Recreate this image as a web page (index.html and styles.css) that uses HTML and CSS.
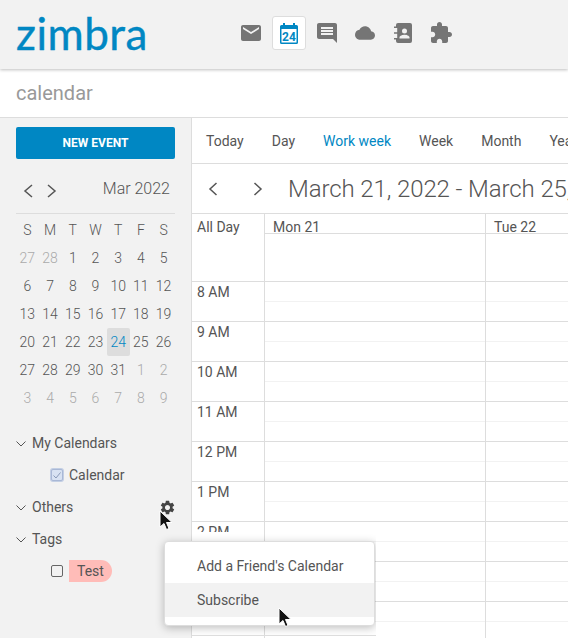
FILE: index.html
```html
<!DOCTYPE html>
<html lang="en">
<head>
  <meta charset="UTF-8">
  <meta name="viewport" content="width=device-width, initial-scale=1.0">
  <title>Zimbra calendar</title>
  <link rel="stylesheet" href="styles.css">
</head>
<body>
  <header class="topbar">
    <span class="logo">zimbra</span>
    <nav class="apps">
      <span class="app app-mail">
        <svg viewBox="0 0 24 24" width="24" height="24"><path d="M20 4H4c-1.1 0-2 .9-2 2v12c0 1.1.9 2 2 2h16c1.1 0 2-.9 2-2V6c0-1.1-.9-2-2-2zm0 4l-8 5-8-5V6l8 5 8-5v2z"/></svg>
      </span>
      <span class="app app-active">
        <svg viewBox="0 0 18 21" width="18" height="21">
          <path d="M3 0h2v2h8V0h2v2h1.5A1.5 1.5 0 0 1 18 3.5v16a1.5 1.5 0 0 1-1.5 1.5h-15A1.5 1.5 0 0 1 0 19.5v-16A1.5 1.5 0 0 1 1.500 2H3z"/>
          <rect class="cal-face" x="1.500" y="6" width="15" height="13.500"/>
          <text class="cal-num" x="9" y="17.500">24</text>
        </svg>
      </span>
      <span class="app">
        <svg viewBox="0 0 24 24" width="24" height="24"><path d="M20 2H4c-1.100 0-2 .9-2 2v12c0 1.100.9 2 2 2h14l4 4V4c0-1.100-.9-2-2-2zm-2 12H6v-2h12v2zm0-3H6V9h12v2zm0-3H6V6h12v2z"/></svg>
      </span>
      <span class="app">
        <svg viewBox="0 0 24 24" width="20" height="20"><path d="M19.350 10.040C18.670 6.590 15.640 4 12 4 9.110 4 6.600 5.640 5.350 8.040 2.340 8.360 0 10.910 0 14c0 3.310 2.690 6 6 6h13c2.760 0 5-2.240 5-5 0-2.640-2.050-4.780-4.650-4.960z"/></svg>
      </span>
      <span class="app">
        <svg viewBox="0 0 24 24" width="24" height="24">
          <path fill-rule="evenodd" d="M7 2h12a2 2 0 0 1 2 2v16a2 2 0 0 1-2 2H7a2 2 0 0 1-2-2V4a2 2 0 0 1 2-2zm6.500 5.500a2.500 2.500 0 1 0 0 5 2.500 2.500 0 0 0 0-5zM8.500 17.500h10v-1.200c0-1.700-3.300-2.600-5-2.600s-5 .9-5 2.600z"/>
          <path d="M3 5.500h4v1.500H3zM3 11.250h4v1.500H3zM3 17h4v1.500H3z"/>
          <path class="cal-gap" d="M5 7h1.200v4.250H5zM5 12.750h1.200V17H5z"/>
        </svg>
      </span>
      <span class="app">
        <svg viewBox="0 0 24 24" width="24" height="24"><path d="M20.500 11H19V7c0-1.100-.9-2-2-2h-4V3.500C13 2.120 11.880 1 10.500 1S8 2.120 8 3.500V5H4c-1.100 0-1.990.9-1.990 2v3.800H3.500c1.490 0 2.700 1.210 2.700 2.700s-1.210 2.700-2.700 2.700H2V20c0 1.100.9 2 2 2h3.800v-1.500c0-1.490 1.210-2.700 2.700-2.700 1.490 0 2.700 1.210 2.700 2.700V22H17c1.100 0 2-.9 2-2v-4h1.500c1.380 0 2.500-1.120 2.500-2.500S21.880 11 20.500 11z"/></svg>
      </span>
    </nav>
  </header>

  <div class="subbar">calendar</div>

  <div class="layout">
    <aside class="sidebar">
      <button class="new-event">NEW EVENT</button>

      <div class="mini-head">
        <svg class="chev" viewBox="0 0 12 16" width="12" height="16"><path d="M10 2 3 8l7 6"/></svg>
        <svg class="chev" viewBox="0 0 12 16" width="12" height="16"><path d="M2 2l7 6-7 6"/></svg>
        <span class="mini-month">Mar 2022</span>
      </div>

      <div class="mini-cal">
        <span class="dow">S</span><span class="dow">M</span><span class="dow">T</span><span class="dow">W</span><span class="dow">T</span><span class="dow">F</span><span class="dow">S</span>
        <span class="off">27</span><span class="off">28</span><span>1</span><span>2</span><span>3</span><span>4</span><span>5</span>
        <span>6</span><span>7</span><span>8</span><span>9</span><span>10</span><span>11</span><span>12</span>
        <span>13</span><span>14</span><span>15</span><span>16</span><span>17</span><span>18</span><span>19</span>
        <span>20</span><span>21</span><span>22</span><span>23</span><span class="today">24</span><span>25</span><span>26</span>
        <span>27</span><span>28</span><span>29</span><span>30</span><span>31</span><span class="off">1</span><span class="off">2</span>
        <span class="off">3</span><span class="off">4</span><span class="off">5</span><span class="off">6</span><span class="off">7</span><span class="off">8</span><span class="off">9</span>
      </div>

      <ul class="tree">
        <li class="tree-group">
          <svg class="tree-chev" viewBox="0 0 10 6" width="10" height="6"><path d="M.5.500 5 5 9.500.500"/></svg>
          My Calendars
        </li>
        <li class="tree-item">
          <span class="check check-on">
            <svg viewBox="0 0 10 10" width="10" height="10"><path d="M1.500 5.500 4 8l4.500-5.500"/></svg>
          </span>
          Calendar
        </li>
        <li class="tree-group">
          <svg class="tree-chev" viewBox="0 0 10 6" width="10" height="6"><path d="M.5.500 5 5 9.500.500"/></svg>
          Others
          <svg class="gear" viewBox="0 0 24 24" width="17" height="17"><path d="M19.140 12.940c.04-.3.060-.61.060-.94 0-.32-.02-.64-.07-.94l2.030-1.580a.49.49 0 0 0 .12-.61l-1.920-3.320a.488.488 0 0 0-.59-.22l-2.390.96c-.5-.38-1.030-.7-1.620-.94l-.36-2.540a.484.484 0 0 0-.48-.41h-3.840c-.24 0-.43.170-.47.41l-.36 2.540c-.59.240-1.130.57-1.620.94l-2.390-.96c-.22-.08-.47 0-.59.220L2.740 8.870c-.12.210-.08.470.12.610l2.030 1.580c-.05.3-.09.630-.09.940s.02.640.07.940l-2.030 1.580a.49.49 0 0 0-.12.610l1.920 3.320c.12.220.37.290.59.220l2.390-.96c.5.380 1.030.7 1.620.94l.36 2.540c.05.240.24.410.48.410h3.840c.24 0 .44-.17.470-.41l.36-2.540c.59-.24 1.130-.56 1.620-.94l2.390.96c.22.080.47 0 .59-.22l1.920-3.320c.12-.22.070-.47-.12-.61l-2.010-1.580zM12 15.600c-1.980 0-3.600-1.620-3.600-3.600s1.620-3.600 3.600-3.600 3.600 1.620 3.600 3.600-1.620 3.600-3.600 3.600z"/></svg>
        </li>
        <li class="tree-group">
          <svg class="tree-chev" viewBox="0 0 10 6" width="10" height="6"><path d="M.5.500 5 5 9.500.500"/></svg>
          Tags
        </li>
        <li class="tree-item">
          <span class="check"></span>
          <span class="tag">Test</span>
        </li>
      </ul>
    </aside>

    <main class="main">
      <div class="views">
        <span class="view">Today</span>
        <span class="view">Day</span>
        <span class="view view-active">Work week</span>
        <span class="view">Week</span>
        <span class="view">Month</span>
        <span class="view">Year</span>
      </div>

      <div class="datebar">
        <svg class="chev" viewBox="0 0 12 16" width="12" height="16"><path d="M9.500 2 3 8l6.500 6"/></svg>
        <svg class="chev" viewBox="0 0 12 16" width="12" height="16"><path d="M2.500 2 9 8l-6.500 6"/></svg>
        <span class="date-title">March 21, 2022 - March 25, 2022</span>
      </div>

      <div class="grid">
        <div class="row row-head">
          <div class="time">All Day</div>
          <div class="day"><div class="day-name">Mon 21</div></div>
          <div class="day"><div class="day-name">Tue 22</div></div>
        </div>
        <div class="row"><div class="time">8 AM</div><div class="day slot"></div><div class="day slot"></div></div>
        <div class="row"><div class="time">9 AM</div><div class="day slot"></div><div class="day slot"></div></div>
        <div class="row"><div class="time">10 AM</div><div class="day slot"></div><div class="day slot"></div></div>
        <div class="row"><div class="time">11 AM</div><div class="day slot"></div><div class="day slot"></div></div>
        <div class="row"><div class="time">12 PM</div><div class="day slot"></div><div class="day slot"></div></div>
        <div class="row"><div class="time">1 PM</div><div class="day slot"></div><div class="day slot"></div></div>
        <div class="row"><div class="time"><span class="time-cut">2 PM</span></div><div class="day slot"></div><div class="day slot"></div></div>
        <div class="row"><div class="time"></div><div class="day slot"></div><div class="day slot"></div></div>
        <div class="row"><div class="time"></div><div class="day slot"></div><div class="day slot"></div></div>
      </div>
    </main>
  </div>

  <div class="menu-clip">
    <div class="menu">
      <div class="menu-item">Add a Friend's Calendar</div>
      <div class="menu-item menu-item-hover">Subscribe</div>
    </div>
  </div>

  <svg class="cursor cursor-gear" viewBox="0 0 14 22" width="14" height="22"><path d="M1 1v16l4-3.500 2.500 6 2.500-1-2.500-6H13z"/></svg>
  <svg class="cursor cursor-menu" viewBox="0 0 14 22" width="14" height="22"><path d="M1 1v16l4-3.500 2.500 6 2.500-1-2.500-6H13z"/></svg>
</body>
</html>
```

FILE: styles.css
```css
* {
  box-sizing: border-box;
}

html, body {
  height: 100%;
}

body {
  margin: 0;
  overflow: hidden;
  position: relative;
  font-family: Roboto, "Liberation Sans", sans-serif;
  font-size: 14px;
  color: #555;
  background: #fff;
}

/* top bar */
.topbar {
  position: relative;
  z-index: 2;
  display: flex;
  align-items: center;
  height: 69px;
  padding-left: 16px;
  background: #f2f2f2;
  box-shadow: 0 1px 3px rgba(0, 0, 0, .25);
}

.logo {
  width: 130px;
  font-family: Lato, sans-serif;
  font-size: 44px;
  line-height: 1;
  letter-spacing: .5px;
  margin-top: -4px;
  color: #0087c3;
  -webkit-text-stroke: .4px #0087c3;
}

.apps {
  display: flex;
  align-items: center;
  margin: -3px 0 0 88px;
}

.app {
  display: flex;
  align-items: center;
  justify-content: center;
  width: 34px;
  height: 34px;
  margin-right: 4px;
}

.app svg {
  fill: #757575;
}

.app .cal-gap {
  fill: #f2f2f2;
}

.app-active {
  background: #fff;
  border: 1px solid #ddd;
  border-radius: 3px;
}

.app-active svg {
  fill: #0087c3;
}

.app-active .cal-face {
  fill: #fff;
}

.app-active .cal-num {
  fill: #0087c3;
  font-size: 12px;
  font-weight: 700;
  text-anchor: middle;
}

.subbar {
  height: 49px;
  padding: 12px 16px 0;
  font-size: 20px;
  line-height: 24px;
  color: #999;
  border-bottom: 1px solid #ddd;
}

.layout {
  display: flex;
  height: 520px;
}

/* left column */
.sidebar {
  flex: none;
  width: 192px;
  padding: 9px 16px 0;
  background: #f2f2f2;
  border-right: 1px solid #ddd;
}

.new-event {
  display: block;
  width: 159px;
  height: 32px;
  border: 0;
  border-radius: 2px;
  background: #0087c3;
  color: #fff;
  font-family: inherit;
  font-size: 12px;
  font-weight: 700;
}

.mini-head {
  display: flex;
  align-items: center;
  height: 55px;
  padding: 9px 5px 0 6px;
  border-bottom: 1px solid #ddd;
  gap: 12px;
}

.chev {
  flex: none;
  fill: none;
  stroke: #555;
  stroke-width: 1.500;
}

.mini-month {
  margin-left: auto;
  margin-top: -4px;
  font-size: 16px;
  font-weight: 300;
}

.mini-cal {
  display: grid;
  grid-template-columns: repeat(7, 22.710px);
  grid-auto-rows: 28px;
  margin-top: 1px;
  padding-top: 1px;
  font-weight: 300;
  text-align: center;
  line-height: 28px;
}

.mini-cal .off {
  color: #aaa;
}

.mini-cal .today {
  background: #ddd;
  border-radius: 2px;
  color: #0087c3;
}

.tree {
  list-style: none;
  margin: 15px 0 0;
  padding: 0;
}

.tree li {
  display: flex;
  align-items: center;
  height: 32px;
}

.tree-chev {
  flex: none;
  margin: 1px 6px 0 0;
  fill: none;
  stroke: #555;
}

.tree-group {
  position: relative;
}

.tree-item {
  padding-left: 35px;
}

.gear {
  position: absolute;
  left: 143px;
  top: 8px;
  fill: #444;
}

.check {
  flex: none;
  display: flex;
  align-items: center;
  justify-content: center;
  width: 12px;
  height: 12px;
  margin-right: 6px;
  border: 1px solid #666;
  border-radius: 2px;
}

.check-on {
  background: #d8e2f2;
  border-color: #a9b8d6;
  box-shadow: 0 0 0 1px #c3cfe4;
}

.check-on svg {
  fill: none;
  stroke: #8a9ab8;
  stroke-width: 1;
}

.tag {
  height: 22px;
  padding: 0 8px;
  line-height: 22px;
  background: #ffbcb8;
  border-radius: 0 11px 11px 0;
}

/* right column */
.main {
  flex: none;
  width: 376px;
  overflow: hidden;
  background: #fff;
}

.views {
  display: flex;
  align-items: center;
  height: 46px;
  border-bottom: 1px solid #ddd;
}

.view {
  flex: none;
  padding: 0 14px;
}

.view-active {
  color: #0087c3;
}

.datebar {
  display: flex;
  align-items: center;
  height: 50px;
  padding-left: 15px;
  white-space: nowrap;
  border-bottom: 1px solid #ddd;
}

.datebar .chev + .chev {
  margin-left: 33px;
}

.date-title {
  margin-left: 24px;
  font-size: 24px;
  font-weight: 300;
  letter-spacing: -.1px;
}

.row {
  display: grid;
  grid-template-columns: 73px 221px 221px;
  height: 40px;
  border-bottom: 1px solid #ddd;
}

.row-head {
  height: 68px;
}

.time {
  padding: 2px 0 0 5px;
  line-height: 16px;
  border-right: 1px solid #ddd;
}

.row-head .time {
  padding-top: 5px;
}

.time-cut {
  display: block;
  height: 8px;
  overflow: hidden;
}

.day {
  border-right: 1px solid #ddd;
}

.day-name {
  height: 20px;
  padding: 5px 0 0 8px;
  line-height: 16px;
  border-bottom: 1px solid #ddd;
}

.slot {
  background: linear-gradient(#f2f2f2, #f2f2f2) 0 19px / 100% 1px no-repeat;
}

/* friend calendar menu */
.menu-clip {
  position: absolute;
  left: 140px;
  top: 533px;
  width: 236px;
  height: 103px;
  overflow: hidden;
  padding: 8px 0 0 24px;
}

.menu-clip::after {
  content: "";
  position: absolute;
  left: 52px;
  right: 0;
  bottom: 0;
  height: 1px;
  background: #ddd;
}

.menu {
  width: 211px;
  height: 85px;
  padding-top: 7px;
  background: #fff;
  border: 1px solid #ddd;
  border-radius: 4px;
  box-shadow: 0 2px 8px rgba(0, 0, 0, .25);
}

.menu-item {
  height: 34px;
  padding-left: 32px;
  line-height: 34px;
}

.menu-item-hover {
  background: #f2f2f2;
}

.cursor {
  position: absolute;
  fill: #111;
  stroke: #fff;
  stroke-width: 1;
}

.cursor-gear {
  left: 159px;
  top: 510px;
}

.cursor-menu {
  left: 278px;
  top: 607px;
}
```
